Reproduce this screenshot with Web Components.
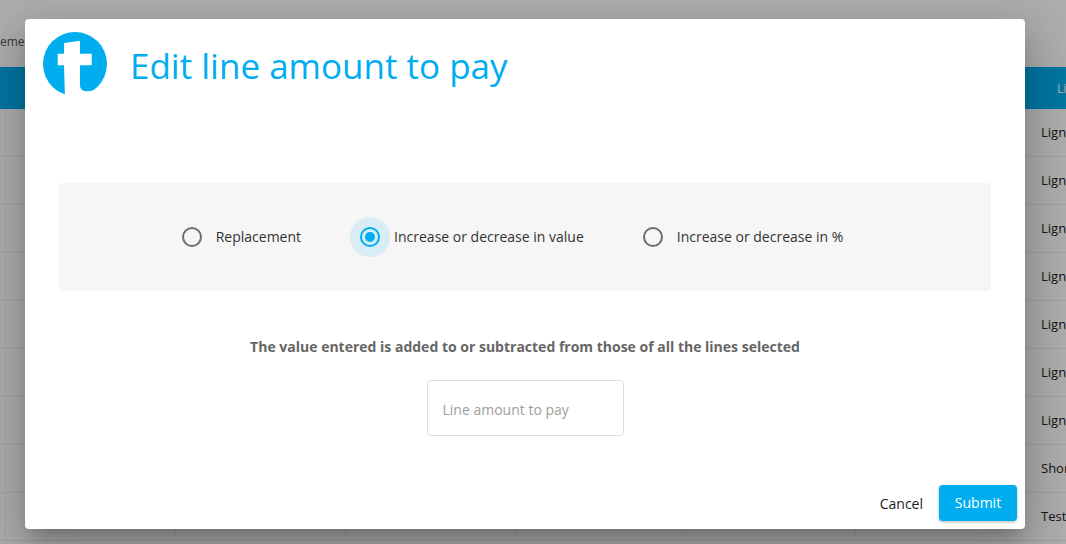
<!DOCTYPE html>
<html>
<head>
<meta charset="utf-8">
<title>Edit line amount to pay</title>
<style>
html, body { margin: 0; height: 100%; overflow: hidden; }
body { font-family: "Open Sans", "Liberation Sans", sans-serif; }
</style>
</head>
<body>
<pay-page>
  <back-table></back-table>
  <edit-dialog slot="dialog" heading="Edit line amount to pay">
    <radio-panel>
      <radio-option>Replacement</radio-option>
      <radio-option checked>Increase or decrease in value</radio-option>
      <radio-option>Increase or decrease in %</radio-option>
    </radio-panel>
    <p-note>The value entered is added to or subtracted from those of all the lines selected</p-note>
    <amount-field>Line amount to pay</amount-field>
    <span slot="actions" class="cancel">Cancel</span>
    <span slot="actions" class="submit">Submit</span>
  </edit-dialog>
</pay-page>

<script>
class PayPage extends HTMLElement {
    constructor(){
        super();
        this.attachShadow({mode:"open"});
        this.shadowRoot.innerHTML = `
<style>
:host { display: block; position: relative; width: 100%; height: 100vh; overflow: hidden; background: #fff; }
#overlay {
    position: absolute;
    inset: 0;
    background: rgba(0, 0, 0, 0.32);
    display: flex;
    justify-content: flex-start;
    align-items: flex-start;
    padding: 19px 0 0 25px;
}
</style>
<slot></slot>
<div id="overlay"><slot name="dialog"></slot></div>`;
    }
}

class BackTable extends HTMLElement {
    constructor(){
        super();
        this.attachShadow({mode:"open"});
        var cells = ["Ligne","Ligne","Ligne","Ligne","Ligne","Ligne","Ligne","Short","Test"];
        var rows = cells.map(t => `<div class="row"><i></i><i></i><i></i><i></i><i></i><i></i><span>${t}</span></div>`).join("");
        this.shadowRoot.innerHTML = `
<style>
:host { display: block; font-size: 13px; color: #222; }
#crumb { height: 67px; box-sizing: border-box; padding-top: 34px; color: #555; font-size: 12px; line-height: 16px; }
#head { height: 42px; background: #00aeef; display: flex; justify-content: flex-end; align-items: center; color: #fff; font-size: 12px; }
#head span { width: 9px; overflow: hidden; }
.row { height: 47px; border-bottom: 1px solid #eee; display: flex; align-items: center; white-space: nowrap; }
.row i { flex: none; width: 1px; height: 100%; background: #f2f2f2; margin-right: 169px; }
.row i:first-child { margin-left: 5px; }
.row span { margin: 0 0 2px 16px; }
</style>
<div id="crumb">eme</div>
<div id="head"><span>Lig</span></div>
${rows}`;
    }
}

class EditDialog extends HTMLElement {
    constructor(){
        super();
        this.attachShadow({mode:"open"});
        this.shadowRoot.innerHTML = `
<style>
:host {
    display: flex;
    flex-direction: column;
    width: 1000px;
    height: 510px;
    box-sizing: border-box;
    background: #fff;
    border-radius: 4px;
    box-shadow: 0 11px 15px -7px rgba(0,0,0,.2), 0 24px 38px 3px rgba(0,0,0,.14), 0 9px 46px 8px rgba(0,0,0,.12);
}
#title { display: flex; align-items: center; gap: 23px; padding: 13px 0 0 18px; height: 64px; }
#title svg { display: block; flex: none; }
h1 { margin: 4px 0 0; font-size: 35px; font-weight: 400; color: #00aeef; line-height: 46px; }
#body { flex: 1; padding: 87px 34px 0; display: flex; flex-direction: column; align-items: stretch; }
#actions { display: flex; justify-content: flex-end; align-items: center; gap: 16px; padding: 0 8px 8px 0; }
::slotted(.cancel) { font-size: 14px; color: #222; }
::slotted(.submit) {
    width: 78px;
    height: 36px;
    line-height: 36px;
    text-align: center;
    font-size: 14px;
    font-weight: 500;
    color: #fff;
    background: #00aeef;
    border-radius: 4px;
    box-shadow: 0 1px 3px rgba(0,0,0,.3);
}
</style>
<div id="title">
    <svg width="64" height="64" viewBox="0 0 64 64">
        <circle cx="32" cy="32" r="32" fill="#00aeef"/>
        <path d="M21 11 L37 8.7 V21.7 H48.7 V33.3 H37 V53 Q37 59 43 59.3 Q47 59.5 51 58 L52 66 H22 L21 33.3 H14.7 V21.7 H21 Z" fill="#fff"/>
    </svg>
    <h1></h1>
</div>
<div id="body"><slot></slot></div>
<div id="actions"><slot name="actions"></slot></div>`;
        this.shadowRoot.querySelector("h1").textContent = this.getAttribute("heading");
    }
}

class RadioPanel extends HTMLElement {
    constructor(){
        super();
        this.attachShadow({mode:"open"});
        this.shadowRoot.innerHTML = `
<style>
:host {
    display: flex;
    justify-content: center;
    align-items: center;
    gap: 59px;
    height: 108px;
    padding-right: 25px;
    box-sizing: border-box;
    background: #f6f6f6;
    border-radius: 3px;
}
</style>
<slot></slot>`;
    }
}

class RadioOption extends HTMLElement {
    constructor(){
        super();
        this.attachShadow({mode:"open"});
        this.shadowRoot.innerHTML = `
<style>
:host { display: flex; align-items: center; gap: 14px; font-size: 14px; color: #333; }
span { margin-bottom: 2px; }
#ring {
    position: relative;
    width: 20px;
    height: 20px;
    box-sizing: border-box;
    border: 2px solid #6e6e6e;
    border-radius: 50%;
}
:host([checked]) #ring { border-color: #00aeef; }
:host([checked]) #ring::before {
    content: "";
    position: absolute;
    left: -12px;
    top: -12px;
    width: 40px;
    height: 40px;
    border-radius: 50%;
    background: rgba(0, 174, 239, 0.12);
}
:host([checked]) #ring::after {
    content: "";
    position: absolute;
    left: 3px;
    top: 3px;
    width: 10px;
    height: 10px;
    border-radius: 50%;
    background: #00aeef;
}
</style>
<div id="ring"></div><span><slot></slot></span>`;
    }
}

class PNote extends HTMLElement {
    constructor(){
        super();
        this.attachShadow({mode:"open"});
        this.shadowRoot.innerHTML = `
<style>
:host { display: block; margin-top: 46px; text-align: center; font-size: 14px; line-height: 20px; font-weight: 700; color: #666; }
</style>
<slot></slot>`;
    }
}

class AmountField extends HTMLElement {
    constructor(){
        super();
        this.attachShadow({mode:"open"});
        this.shadowRoot.innerHTML = `
<style>
:host {
    display: flex;
    align-items: center;
    align-self: center;
    width: 197px;
    height: 56px;
    margin-top: 23px;
    padding: 2px 15px 0;
    box-sizing: border-box;
    border: 1px solid #dedede;
    border-radius: 4px;
    font-size: 14px;
    color: #9e9e9e;
}
</style>
<slot></slot>`;
    }
}

customElements.define("pay-page", PayPage);
customElements.define("back-table", BackTable);
customElements.define("edit-dialog", EditDialog);
customElements.define("radio-panel", RadioPanel);
customElements.define("radio-option", RadioOption);
customElements.define("p-note", PNote);
customElements.define("amount-field", AmountField);
</script>
</body>
</html>
